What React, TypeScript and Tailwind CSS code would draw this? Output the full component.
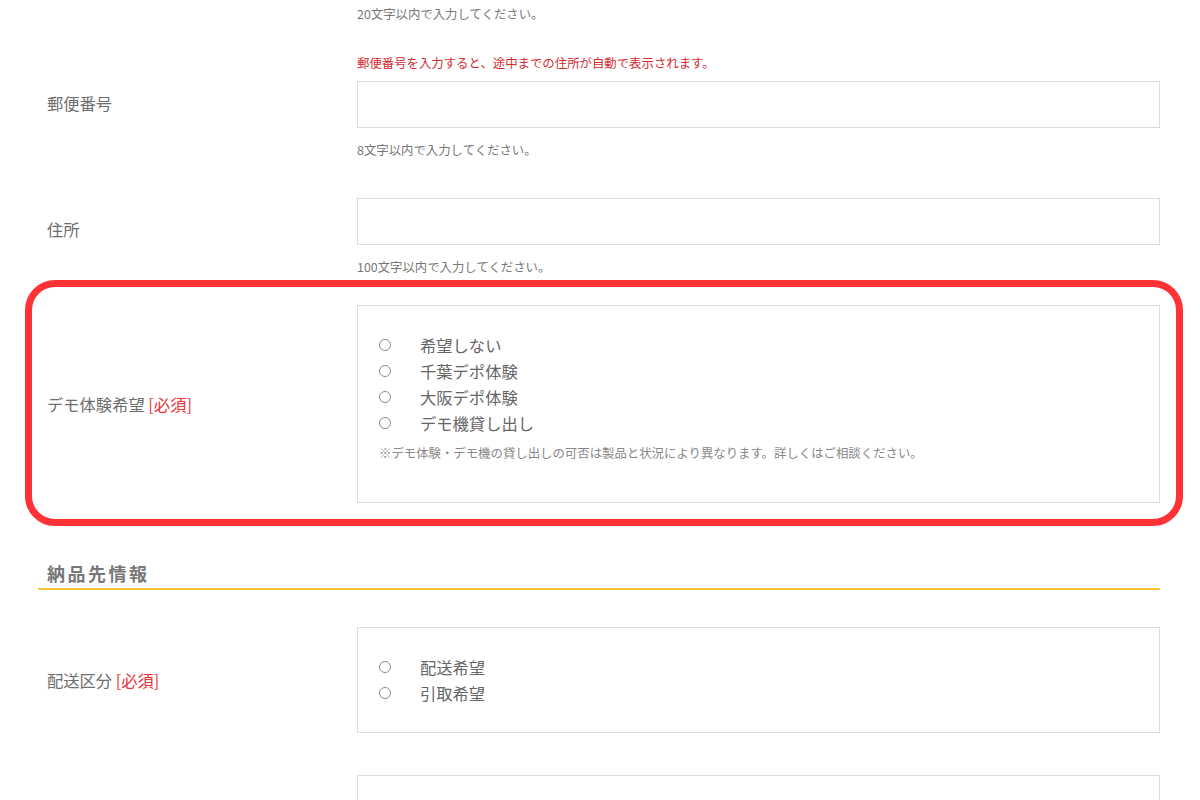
import React from "react";

const font = { fontFamily: '"Noto Sans CJK JP", "Noto Sans", sans-serif' };

function Radio({ label }: { label: string }) {
  return (
    <div className="flex items-center h-[26px]">
      <span className="w-[12px] h-[12px] rounded-full border border-[#8a8a8a] bg-white shrink-0" />
      <span className="ml-[29px] text-[16.3px] text-[#666]">{label}</span>
    </div>
  );
}

function Hint({ children, className = "" }: { children: React.ReactNode; className?: string }) {
  return <p className={`text-[12.4px] leading-[16px] text-[#777] ${className}`}>{children}</p>;
}

function Label({ children, className = "" }: { children: React.ReactNode; className?: string }) {
  return <div className={`w-[319px] pl-[9px] text-[16.3px] text-[#6e6e6e] shrink-0 ${className}`}>{children}</div>;
}

const Req = () => <span className="text-[#e8343a]"> [必須]</span>;

export default function App() {
  return (
    <div className="w-[1200px] h-[800px] bg-white overflow-hidden" style={font}>
      <div className="ml-[38px] w-[1122px] pt-[6px]">
        <div className="flex">
          <div className="w-[319px]" />
          <Hint>20文字以内で入力してください。</Hint>
        </div>

        <div className="flex items-center mt-[33px]">
          <Label className="pb-[6px]">郵便番号</Label>
          <div className="w-[803px]">
            <p className="text-[12.4px] leading-[16px] text-[#d42a2f]">郵便番号を入力すると、途中までの住所が自動で表示されます。</p>
            <div className="mt-[10px] h-[47px] border border-[#dcdcdc] bg-white" />
            <Hint className="mt-[14px]">8文字以内で入力してください。</Hint>
          </div>
        </div>

        <div className="flex items-center mt-[40px]">
          <Label className="pb-[14px]">住所</Label>
          <div className="w-[803px]">
            <div className="h-[47px] border border-[#dcdcdc] bg-white" />
            <Hint className="mt-[14px]">100文字以内で入力してください。</Hint>
          </div>
        </div>

        <div className="relative mt-[30px]">
          <div className="flex items-center">
            <Label>
              デモ体験希望<Req />
            </Label>
            <div className="w-[803px] h-[198px] border border-[#dcdcdc] pl-[21px] pt-[26px]">
              <Radio label="希望しない" />
              <Radio label="千葉デポ体験" />
              <Radio label="大阪デポ体験" />
              <Radio label="デモ機貸し出し" />
              <p className="mt-[8px] text-[12.4px] leading-[18px] text-[#888]">
                ※デモ体験・デモ機の貸し出しの可否は製品と状況により異なります。詳しくはご相談ください。
              </p>
            </div>
          </div>
          <div className="absolute left-[-13px] right-[-23px] top-[-25px] bottom-[-23px] border-[7px] border-[#ff3236] rounded-[30px] pointer-events-none" />
        </div>

        <div className="mt-[57px] border-b-2 border-[#f7c638] pl-[9px]">
          <h2 className="text-[18px] leading-[26px] font-bold tracking-[2.5px] text-[#777] pb-[2px]">納品先情報</h2>
        </div>

        <div className="flex items-center mt-[37px]">
          <Label>
            配送区分<Req />
          </Label>
          <div className="w-[803px] h-[106px] border border-[#dcdcdc] pl-[21px] pt-[26px]">
            <Radio label="配送希望" />
            <Radio label="引取希望" />
          </div>
        </div>

        <div className="flex mt-[42px]">
          <div className="w-[319px]" />
          <div className="w-[803px] h-[80px] border border-[#dcdcdc]" />
        </div>
      </div>
    </div>
  );
}
